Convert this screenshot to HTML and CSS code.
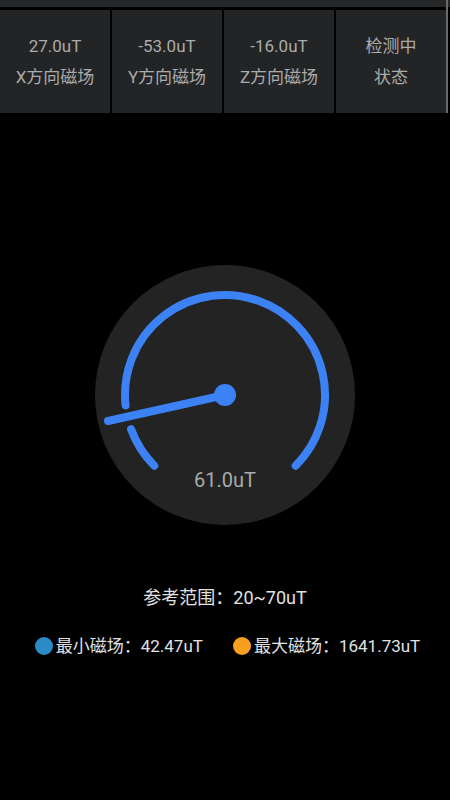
FILE: index.html
```html
<!DOCTYPE html>
<html lang="zh-CN">
<head>
<meta charset="utf-8">
<title>磁场检测</title>
<link rel="stylesheet" href="styles.css">
</head>
<body>
<div class="topbar"></div>
<div class="scrollbar"></div>
<div class="stats">
  <div class="cell"><span>27.0uT</span><span>X方向磁场</span></div>
  <div class="cell"><span>-53.0uT</span><span>Y方向磁场</span></div>
  <div class="cell"><span>-16.0uT</span><span>Z方向磁场</span></div>
  <div class="cell"><span>检测中</span><span>状态</span></div>
</div>
<div class="gauge">
  <svg width="260" height="260" viewBox="0 0 260 260">
    <circle cx="130" cy="130" r="130" fill="#232323"/>
    <path d="M 59.29 200.71 A 100 100 0 0 1 36.03 164.20" fill="none" stroke="#3d82f5" stroke-width="8" stroke-linecap="round"/>
    <path d="M 30.55 140.45 A 100 100 0 1 1 200.71 200.71" fill="none" stroke="#3d82f5" stroke-width="8" stroke-linecap="round"/>
    <line x1="130" y1="130" x2="13" y2="156" stroke="#3d82f5" stroke-width="8" stroke-linecap="round"/>
    <circle cx="130" cy="130" r="11" fill="#3d82f5"/>
    <text x="130" y="222" text-anchor="middle" class="gauge-value">61.0uT</text>
  </svg>
</div>
<div class="range">参考范围：20~70uT</div>
<div class="extremes">
  <div class="item"><span class="dot dot-min"></span><span>最小磁场：42.47uT</span></div>
  <div class="item"><span class="dot dot-max"></span><span>最大磁场：1641.73uT</span></div>
</div>
</body>
</html>
```
FILE: styles.css
```css
html, body {
  margin: 0;
  padding: 0;
  background: #000;
}
body {
  width: 450px;
  height: 800px;
  position: relative;
  font-family: Roboto, "Noto Sans CJK SC", sans-serif;
  overflow: hidden;
}
.topbar {
  height: 7px;
  background: #252627;
}
.scrollbar {
  position: absolute;
  left: 446px;
  top: 0;
  width: 2px;
  height: 113px;
  background: #6a6a6a;
}
.stats {
  margin-top: 3px;
  width: 446px;
  display: grid;
  grid-template-columns: repeat(4, 1fr);
  gap: 2px;
}
.cell {
  height: 103px;
  background: #232425;
  color: #ababab;
  font-size: 17px;
  line-height: 31px;
  display: flex;
  flex-direction: column;
  align-items: center;
  justify-content: center;
  padding-top: 1px;
  box-sizing: border-box;
}
.gauge {
  width: 260px;
  height: 260px;
  margin: 152px auto 0;
}
.gauge svg {
  display: block;
}
.gauge-value {
  font-family: Roboto, "Noto Sans CJK SC", sans-serif;
  font-size: 20px;
  fill: #aaaaaa;
}
.range {
  margin-top: 60px;
  text-align: center;
  color: #e2e2e2;
  font-size: 18px;
  line-height: 26px;
}
.extremes {
  margin-top: 22px;
  display: flex;
  justify-content: center;
  gap: 30px;
  color: #e2e2e2;
  font-size: 17px;
  line-height: 26px;
  padding-left: 5px;
}
.item {
  display: flex;
  align-items: center;
  gap: 3px;
}
.dot {
  width: 18px;
  height: 18px;
  border-radius: 50%;
  display: inline-block;
}
.dot-min { background: #2b8bc6; }
.dot-max { background: #f7a020; }
```
